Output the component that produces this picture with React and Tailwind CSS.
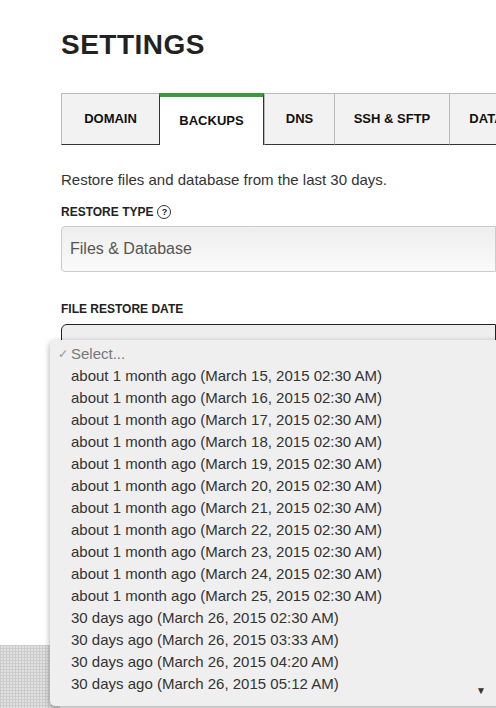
const tabs = [
  { label: 'DOMAIN', w: 'w-[98px]' },
  { label: 'BACKUPS', w: 'w-[105px]', active: true },
  { label: 'DNS', w: 'w-[70px]' },
  { label: 'SSH & SFTP', w: 'w-[115px]' },
  { label: 'DATABASE', w: 'w-[110px]' },
];

const dates = [
  'about 1 month ago (March 15, 2015 02:30 AM)',
  'about 1 month ago (March 16, 2015 02:30 AM)',
  'about 1 month ago (March 17, 2015 02:30 AM)',
  'about 1 month ago (March 18, 2015 02:30 AM)',
  'about 1 month ago (March 19, 2015 02:30 AM)',
  'about 1 month ago (March 20, 2015 02:30 AM)',
  'about 1 month ago (March 21, 2015 02:30 AM)',
  'about 1 month ago (March 22, 2015 02:30 AM)',
  'about 1 month ago (March 23, 2015 02:30 AM)',
  'about 1 month ago (March 24, 2015 02:30 AM)',
  'about 1 month ago (March 25, 2015 02:30 AM)',
  '30 days ago (March 26, 2015 02:30 AM)',
  '30 days ago (March 26, 2015 03:33 AM)',
  '30 days ago (March 26, 2015 04:20 AM)',
  '30 days ago (March 26, 2015 05:12 AM)',
];

export default function App() {
  return (
    <div className="relative w-[496px] h-[708px] overflow-hidden bg-white font-[Liberation_Sans,Arial,sans-serif] text-[#333]">
      <div className="pl-[61px] pt-[28px]">
        <h1 className="text-[28px] font-black tracking-[0.5px] text-[#222] leading-[34px]">SETTINGS</h1>
        <div className="flex mt-[31px] w-[600px]">
          {tabs.map((t) => (
            <div
              key={t.label}
              className={`${t.w} shrink-0 h-[52px] flex items-center justify-center text-[13px] font-bold text-[#111] border-t border-l border-[#bbb] ${
                t.active ? 'bg-white border-t-[4px] border-t-[#3b9a3b] border-l-[#333] border-r border-r-[#333]' : 'bg-[#f2f2f2] border-b border-b-[#333]'
              }`}
            >
              {t.label}
            </div>
          ))}
        </div>
        <p className="mt-[26px] text-[15px] leading-[18px] text-[#333]">Restore files and database from the last 30 days.</p>
        <div className="mt-[16px] flex items-center gap-1 text-[12px] leading-[14px] font-bold text-[#222]">
          RESTORE TYPE
          <span className="w-[14px] h-[14px] rounded-full border border-[#333] text-[9px] flex items-center justify-center font-bold">?</span>
        </div>
        <div className="mt-[7px] h-[46px] rounded-l-[4px] border border-[#ccc] bg-gradient-to-b from-[#eee] to-[#fafafa] flex items-center pl-[8px] text-[16px] text-[#555]">
          Files &amp; Database
        </div>
        <div className="mt-[30px] text-[12px] leading-[14px] font-bold text-[#222]">FILE RESTORE DATE</div>
        <div className="mt-[8px] h-[46px] rounded-tl-[6px] border border-[#222] bg-[#eee]" />
      </div>
      <div className="absolute left-0 top-[645px] w-[60px] h-[63px] bg-[#e0e0e0] bg-[linear-gradient(#ccc_1px,transparent_1px),linear-gradient(90deg,#ccc_1px,transparent_1px)] bg-[size:3px_3px]" />
      <div className="absolute left-[50px] top-[340px] w-[460px] h-[366px] bg-[#efefef] rounded-[5px] shadow-[0_2px_6px_rgba(0,0,0,0.35)] pt-[3px]">
        <div className="h-[22px] flex items-center text-[15px] text-[#777]">
          <span className="w-[21px] text-right pr-[3px] text-[12px] text-[#999]">✓</span>Select...
        </div>
        {dates.map((d) => (
          <div key={d} className="h-[22px] flex items-center pl-[21px] text-[15px] text-[#333] whitespace-nowrap">{d}</div>
        ))}
        <div className="absolute left-[426px] bottom-[8px] text-[10px] text-[#333]">▼</div>
      </div>
    </div>
  );
}
